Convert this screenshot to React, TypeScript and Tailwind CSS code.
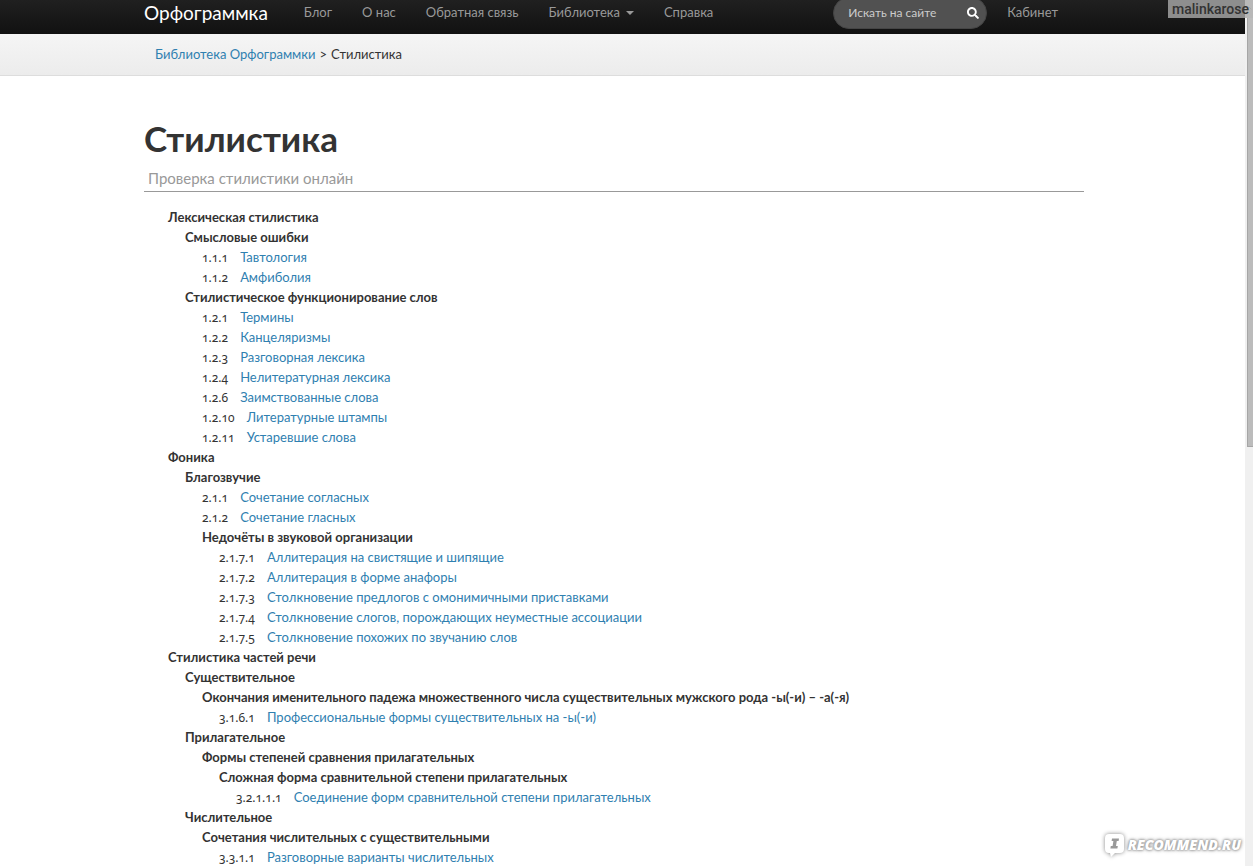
import { ChevronUp } from "lucide-react";
import { useState } from "react";
import { FaSearch } from "react-icons/fa";

type Entry = {
  title: string;
  level: 0 | 1 | 2 | 3 | 4;
  number?: string;
};

const entries: Entry[] = [
  { level: 0, title: "Лексическая стилистика" },
  { level: 1, title: "Смысловые ошибки" },
  { level: 2, number: "1.1.1", title: "Тавтология" },
  { level: 2, number: "1.1.2", title: "Амфиболия" },
  { level: 1, title: "Стилистическое функционирование слов" },
  { level: 2, number: "1.2.1", title: "Термины" },
  { level: 2, number: "1.2.2", title: "Канцеляризмы" },
  { level: 2, number: "1.2.3", title: "Разговорная лексика" },
  { level: 2, number: "1.2.4", title: "Нелитературная лексика" },
  { level: 2, number: "1.2.6", title: "Заимствованные слова" },
  { level: 2, number: "1.2.10", title: "Литературные штампы" },
  { level: 2, number: "1.2.11", title: "Устаревшие слова" },
  { level: 0, title: "Фоника" },
  { level: 1, title: "Благозвучие" },
  { level: 2, number: "2.1.1", title: "Сочетание согласных" },
  { level: 2, number: "2.1.2", title: "Сочетание гласных" },
  { level: 2, title: "Недочёты в звуковой организации" },
  { level: 3, number: "2.1.7.1", title: "Аллитерация на свистящие и шипящие" },
  { level: 3, number: "2.1.7.2", title: "Аллитерация в форме анафоры" },
  { level: 3, number: "2.1.7.3", title: "Столкновение предлогов с омонимичными приставками" },
  { level: 3, number: "2.1.7.4", title: "Столкновение слогов, порождающих неуместные ассоциации" },
  { level: 3, number: "2.1.7.5", title: "Столкновение похожих по звучанию слов" },
  { level: 0, title: "Стилистика частей речи" },
  { level: 1, title: "Существительное" },
  { level: 2, title: "Окончания именительного падежа множественного числа существительных мужского рода -ы(-и) – -а(-я)" },
  { level: 3, number: "3.1.6.1", title: "Профессиональные формы существительных на -ы(-и)" },
  { level: 1, title: "Прилагательное" },
  { level: 2, title: "Формы степеней сравнения прилагательных" },
  { level: 3, title: "Сложная форма сравнительной степени прилагательных" },
  { level: 4, number: "3.2.1.1.1", title: "Соединение форм сравнительной степени прилагательных" },
  { level: 1, title: "Числительное" },
  { level: 2, title: "Сочетания числительных с существительными" },
  { level: 3, number: "3.3.1.1", title: "Разговорные варианты числительных" },
];

const indents = ["pl-6", "pl-[41px]", "pl-[58px]", "pl-[75px]", "pl-[92px]"];

const navLinks = ["Блог", "О нас", "Обратная связь"];

function NavBar() {
  const [query, setQuery] = useState("");

  return (
    <header className="h-[34px] bg-linear-to-b from-[#202020] to-[#111] pr-[17px]">
      <div className="mx-auto flex h-[26px] max-w-[940px] items-center text-[13px] text-[#999]">
        <a href="#" className="mr-9 text-[19px] leading-6 text-white">
          Орфограммка
        </a>
        <nav className="flex items-center gap-[30px]">
          {navLinks.map((label) => (
            <a key={label} href="#" className="hover:text-white">
              {label}
            </a>
          ))}
          <button type="button" className="flex items-center gap-1.5 hover:text-white">
            Библиотека
            <span className="border-x-4 border-t-4 border-x-transparent border-t-[#999]" />
          </button>
          <a href="#" className="hover:text-white">
            Справка
          </a>
        </nav>
        <form
          className="mr-5 ml-auto flex h-8 w-[154px] items-center rounded-full border border-[#444] bg-[#515151] pr-[7px] pl-3.5"
          onSubmit={(e) => e.preventDefault()}
        >
          <input
            type="text"
            aria-label="Искать на сайте"
            placeholder="Искать на сайте"
            value={query}
            onChange={(e) => setQuery(e.target.value)}
            className="min-w-0 flex-1 text-[12px] text-white outline-none placeholder:text-[#ccc]"
          />
          <button type="submit" aria-label="Найти" className="text-white">
            <FaSearch size={12} />
          </button>
        </form>
        <a href="#" className="mr-[26px] hover:text-white">
          Кабинет
        </a>
      </div>
    </header>
  );
}

function Breadcrumbs() {
  return (
    <nav
      aria-label="Навигация"
      className="h-[42px] border-b border-[#ddd] bg-linear-to-b from-[#f5f5f5] to-[#ececec] pr-[17px]"
    >
      <div className="mx-auto flex h-[42px] max-w-[940px] items-center gap-1 pl-[11px] text-[13px]">
        <a href="#" className="text-[#2f80b0] hover:underline">
          Библиотека Орфограммки
        </a>
        <span>&gt;</span>
        <span>Стилистика</span>
      </div>
    </nav>
  );
}

function EntryRow({ entry }: { entry: Entry }) {
  const indent = indents[entry.level];
  if (!entry.number) return <li className={`${indent} font-bold`}>{entry.title}</li>;

  return (
    <li className={`${indent} flex h-5 items-baseline gap-3`}>
      <span className="font-['Noto_Sans',sans-serif] text-[12px] oldstyle-nums">{entry.number}</span>
      <a href="#" className="text-[#2f80b0] hover:underline">
        {entry.title}
      </a>
    </li>
  );
}

function ScrollBar() {
  return (
    <div className="flex w-2 shrink-0 flex-col bg-[#f0f0f0]" aria-hidden="true">
      <ChevronUp size={8} className="mt-1 mb-1.5 text-[#888]" />
      <div className="ml-0.5 h-[429px] border-b border-l border-[#a6a6a6] bg-[#bcbcbc]" />
    </div>
  );
}

function SiteMark() {
  return (
    <div className="absolute right-3 bottom-2 flex items-center gap-px">
      <svg width="24" height="28" viewBox="0 0 24 28" className="drop-shadow-[0_0_2px_#888]">
        <path d="M6 4h11q4 0 4 4v11q0 4-4 4h-5l-4 4-1-4H6q-4 0-4-4V8q0-4 4-4z" fill="#fff" />
        <path d="M9 8.500h7l-.4 2.500h-1.800l-.8 5h1.800l-.4 2.500H7.400l.4-2.500h1.800l.8-5H8.600z" fill="#999" />
      </svg>
      <span className="font-['Open_Sans',sans-serif] text-[14px] font-extrabold text-white italic [text-shadow:0_0_2px_#999,0_0_3px_#999,0_0_4px_#aaa]">
        RECOMMEND.RU
      </span>
    </div>
  );
}

export default function App() {
  return (
    <div className="relative flex h-screen overflow-hidden bg-white font-['Lato',sans-serif] text-[#333]">
      <div className="min-w-0 flex-1">
        <NavBar />
        <Breadcrumbs />
        <main className="pr-[17px]">
          <div className="mx-auto max-w-[940px] pt-[38px]">
            <h1 className="text-[35px] leading-12 font-bold">Стилистика</h1>
            <p className="border-b border-[#999] pt-1.5 pb-0.5 pl-1 text-[15px] leading-[21px] text-[#999]">
              Проверка стилистики онлайн
            </p>
            <ul className="pt-[15px] text-[13px] leading-5 whitespace-nowrap">
              {entries.map((entry) => (
                <EntryRow key={entry.title} entry={entry} />
              ))}
            </ul>
          </div>
        </main>
      </div>
      <ScrollBar />
      <div className="absolute top-0 right-0 h-[18px] bg-[#aaa]/80 pr-1 pl-1 font-[Roboto,sans-serif] text-[14px] leading-[18px] font-medium text-[#333]">
        malinkarose
      </div>
      <SiteMark />
    </div>
  );
}
